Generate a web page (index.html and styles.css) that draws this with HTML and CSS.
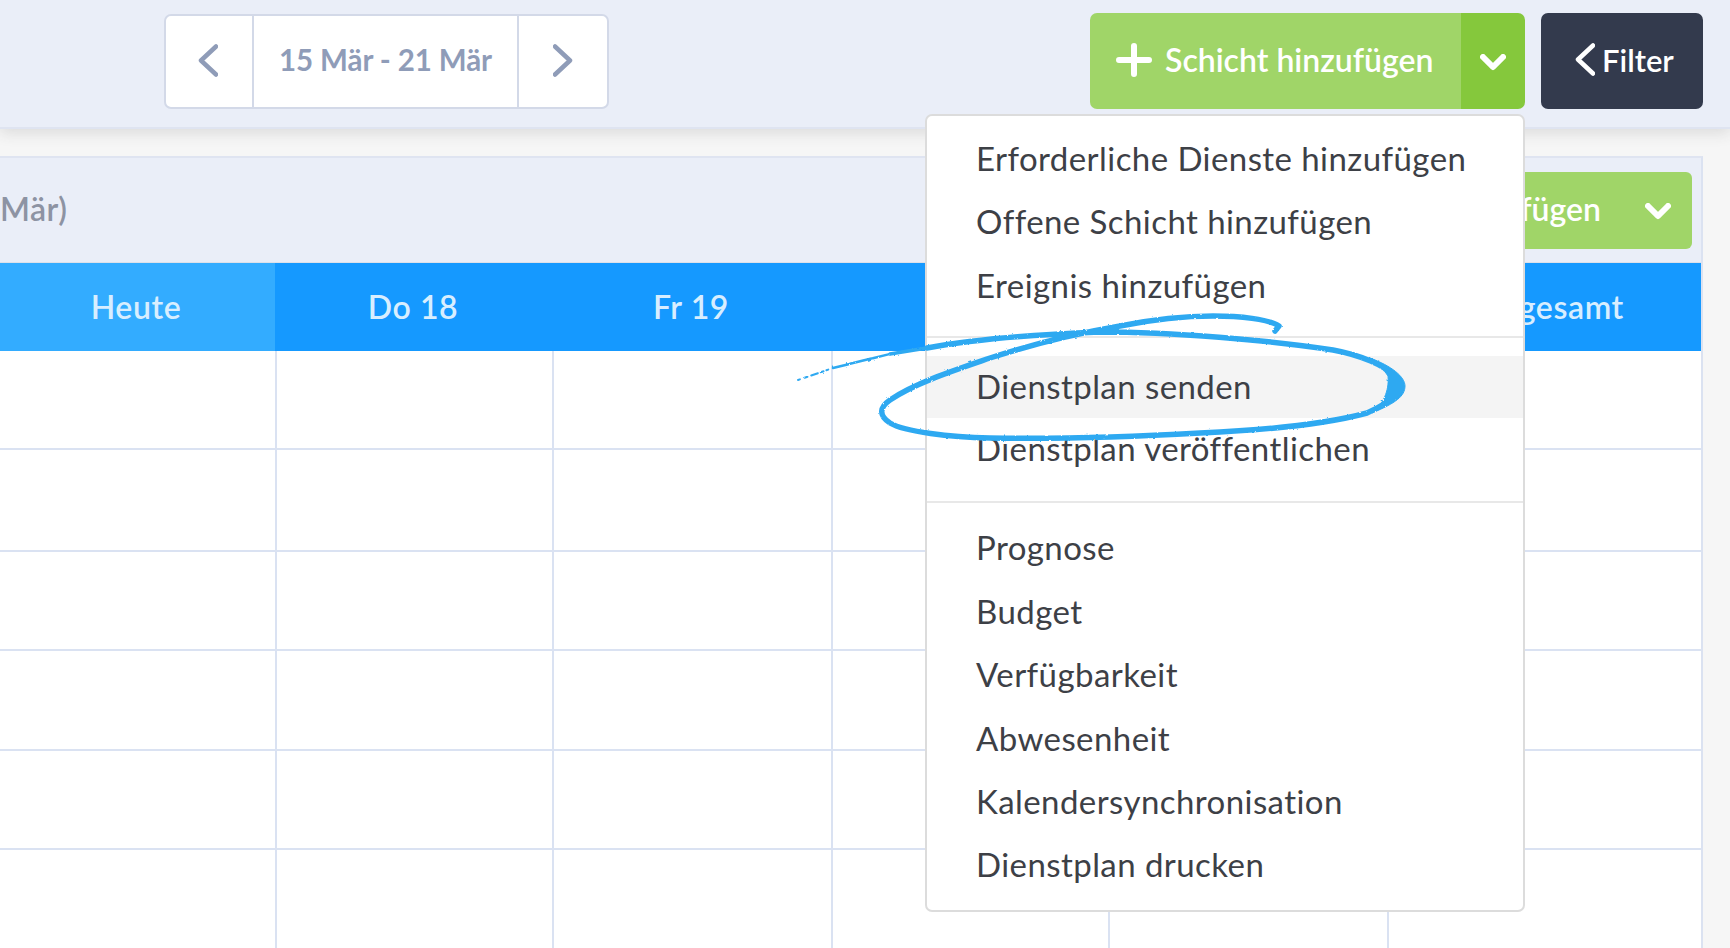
FILE: index.html
```html
<!DOCTYPE html>
<html lang="de">
<head>
<meta charset="utf-8">
<title>Dienstplan</title>
<link rel="stylesheet" href="styles.css">
</head>
<body>
<div class="page">
  <header class="topbar">
    <div class="pager">
      <button class="pager-arrow"><svg class="ico-nav" viewBox="0 0 20 33"><path d="M18 2.5 3 16.5 18 30.5"/></svg></button>
      <div class="pager-date">15 Mär - 21 Mär</div>
      <button class="pager-arrow pager-next"><svg class="ico-nav" viewBox="0 0 20 33"><path d="M2 2.5 17 16.5 2 30.5"/></svg></button>
    </div>
    <div class="actions">
      <div class="add-wrap">
        <div class="split">
          <button class="split-main"><svg class="ico-plus" viewBox="0 0 36 34"><path d="M18 3V31M3 17H33"/></svg><span>Schicht hinzufügen</span></button>
          <button class="split-caret"><svg class="ico-caret" viewBox="0 0 26 17"><path d="M3 3 13 13 23 3"/></svg></button>
        </div>
        <nav class="menu">
          <div class="menu-group">
            <a class="menu-item">Erforderliche Dienste hinzufügen</a>
            <a class="menu-item">Offene Schicht hinzufügen</a>
            <a class="menu-item">Ereignis hinzufügen</a>
          </div>
          <div class="menu-group menu-group-tight">
            <a class="menu-item is-hover">Dienstplan senden</a>
            <a class="menu-item">Dienstplan veröffentlichen</a>
          </div>
          <div class="menu-group">
            <a class="menu-item">Prognose</a>
            <a class="menu-item">Budget</a>
            <a class="menu-item">Verfügbarkeit</a>
            <a class="menu-item">Abwesenheit</a>
            <a class="menu-item">Kalendersynchronisation</a>
            <a class="menu-item">Dienstplan drucken</a>
          </div>
        </nav>
      </div>
      <button class="filter"><svg class="ico-filter" viewBox="0 0 20 33"><path d="M18 2.5 3 16.5 18 30.5"/></svg><span>Filter</span></button>
    </div>
  </header>

  <section class="panel">
    <div class="panel-head">
      <div class="panel-title">Mär)</div>
      <button class="panel-add"><span>Schicht hinzufügen</span><svg class="ico-caret" viewBox="0 0 26 17"><path d="M3 3 13 13 23 3"/></svg></button>
    </div>
    <div class="grid">
      <div class="col-head is-today">Heute</div>
      <div class="col-head">Do 18</div>
      <div class="col-head">Fr 19</div>
      <div class="col-head">Sa 20</div>
      <div class="col-head">So 21</div>
      <div class="col-head col-total">Insgesamt</div>
      <div class="cell"></div><div class="cell"></div><div class="cell"></div><div class="cell"></div><div class="cell"></div><div class="cell"></div>
      <div class="cell"></div><div class="cell"></div><div class="cell"></div><div class="cell"></div><div class="cell"></div><div class="cell"></div>
      <div class="cell"></div><div class="cell"></div><div class="cell"></div><div class="cell"></div><div class="cell"></div><div class="cell"></div>
      <div class="cell"></div><div class="cell"></div><div class="cell"></div><div class="cell"></div><div class="cell"></div><div class="cell"></div>
      <div class="cell"></div><div class="cell"></div><div class="cell"></div><div class="cell"></div><div class="cell"></div><div class="cell"></div>
      <div class="cell"></div><div class="cell"></div><div class="cell"></div><div class="cell"></div><div class="cell"></div><div class="cell"></div>
    </div>
  </section>

  <svg class="scribble" viewBox="0 0 1730 948" aria-hidden="true">
    <defs>
      <filter id="rough" x="-5%" y="-20%" width="110%" height="140%">
        <feTurbulence type="fractalNoise" baseFrequency="0.35" numOctaves="2" seed="4"/>
        <feDisplacementMap in="SourceGraphic" scale="2.2"/>
      </filter>
    </defs>
    <g filter="url(#rough)">
      <path class="scribble-dots" d="M798 380 833 368"/>
      <path class="scribble-tail" d="M833 368 890 354"/>
      <path class="scribble-thin" d="M890 354 927 348"/>
      <path class="scribble-main" d="M927 348C970 340 1020 335 1100 332 1170 332 1270 340 1333 350 1360 355 1385 365 1397 378 1402 390 1395 400 1367 413 1330 423 1270 430 1200 433 1130 437 1050 439 990 438 950 437 905 432 890 423 878 415 880 407 890 400 915 383 955 370 990 358 1045 340 1085 332 1120 326 1150 320 1185 316 1213 316 1240 316 1268 319 1279 326L1275 331"/>
      <path class="scribble-bulge" d="M1370 358C1392 366 1405 377 1405 386 1405 396 1396 403 1372 413 1386 402 1389 387 1388 376 1384 370 1378 364 1370 358Z"/>
    </g>
  </svg>
</div>
</body>
</html>
```

FILE: styles.css
```css
* { box-sizing: border-box; }
html, body { margin: 0; padding: 0; }
body {
  background: #f6f6f6;
  font-family: "Lato", "Liberation Sans", sans-serif;
  color: #3d4046;
}
button { font: inherit; border: 0; padding: 0; cursor: pointer; }
svg { display: block; fill: none; stroke-linecap: round; stroke-linejoin: round; }

.page { position: relative; width: 1730px; height: 948px; overflow: hidden; }

/* top bar */
.topbar {
  display: flex;
  justify-content: space-between;
  height: 129px;
  padding: 14px 27px 0 164px;
  background: #eaeef8;
  border-bottom: 2px solid #dfe4f1;
  box-shadow: 0 4px 14px rgba(60, 60, 60, .14);
  position: relative;
  z-index: 2;
}
.pager {
  display: flex;
  width: 445px;
  height: 95px;
  background: #fff;
  border: 2px solid #d3d9e8;
  border-radius: 7px;
}
.pager-arrow {
  flex: 0 0 86px;
  display: flex;
  align-items: center;
  justify-content: center;
  padding: 0 3px 3px 0;
  background: none;
}
.pager-next { flex: 1; padding: 0 0 3px; }
.pager-date {
  flex: 0 0 267px;
  display: flex;
  align-items: center;
  justify-content: center;
  padding-bottom: 4px;
  border-left: 2px solid #d3d9e8;
  border-right: 2px solid #d3d9e8;
  color: #8f9cb8;
  font-size: 29.5px;
  font-weight: 700;
  letter-spacing: -.1px;
}
.ico-nav { width: 20px; height: 33px; stroke: #8f9cb8; stroke-width: 4.5; }

.actions { display: flex; gap: 16px; margin-top: -1px; }
.add-wrap { position: relative; }
.split { display: flex; width: 435px; height: 96px; border-radius: 7px; overflow: hidden; }
.split-main {
  flex: 0 0 371px;
  display: flex;
  align-items: center;
  gap: 13px;
  padding: 0 0 3px 26px;
  background: #a0d568;
  color: #fff;
  font-size: 32px;
  font-weight: 600;
}
.split-caret {
  flex: 1;
  display: flex;
  align-items: center;
  justify-content: center;
  padding-top: 3px;
  background: #85c83c;
}
.ico-plus { width: 36px; height: 34px; stroke: #fff; stroke-width: 6; }
.ico-caret { width: 26px; height: 17px; stroke: #fff; stroke-width: 6; }
.filter {
  display: flex;
  align-items: center;
  gap: 7px;
  width: 162px;
  height: 96px;
  padding: 0 0 3px 34px;
  background: #333a4d;
  border-radius: 7px;
  color: #fff;
  font-size: 31px;
  font-weight: 600;
}
.ico-filter { width: 20px; height: 33px; stroke: #fff; stroke-width: 4.5; }

/* dropdown */
.menu {
  position: absolute;
  top: 101px;
  right: 0;
  width: 600px;
  height: 798px;
  padding: 12px 0;
  background: #fff;
  border: 2px solid #dcdcdc;
  border-radius: 7px;
  z-index: 3;
}
.menu-group { padding: 18px 0; border-bottom: 2px solid #e8e8e8; }
.menu-group:first-child { padding-top: 0; }
.menu-group:last-child { padding: 14.5px 0 0; border-bottom: 0; }
.menu-item {
  display: block;
  height: 63.4px;
  padding-left: 49px;
  font-size: 33px;
  letter-spacing: .43px;
  line-height: 60px;
  color: #3d4046;
}
.menu-group-tight { padding-bottom: 20.8px; }
.menu-group-tight .menu-item { height: 62px; }
.is-hover { background: #f4f4f4; }

/* schedule panel */
.panel {
  width: 1703px;
  margin-top: 27px;
  background: #fff;
  border-top: 2px solid #dfe4f1;
  border-right: 2px solid #dbe2f1;
}
.panel-head {
  display: flex;
  justify-content: space-between;
  align-items: center;
  height: 105px;
  padding-right: 9px;
  background: #eaeef8;
  border-bottom: 1px solid #dde1ea;
}
.panel-title { padding-bottom: 4px; font-size: 32px; font-weight: 600; letter-spacing: .5px; color: #8d93a3; }
.panel-add {
  display: flex;
  align-items: center;
  justify-content: flex-end;
  gap: 44px;
  width: 380px;
  height: 77px;
  padding: 0 21px 3px 0;
  background: #a0d568;
  border-radius: 6px;
  color: #fff;
  font-size: 32px;
  font-weight: 600;
}
.panel-add .ico-caret { margin-top: 6px; }
.grid {
  display: grid;
  grid-template-columns: 277px 277px 279px 277px 279px 1fr;
  grid-template-rows: 88px 99px 102px 99px 100px 99px 100px;
}
.col-head {
  display: flex;
  align-items: center;
  justify-content: center;
  padding: 0 5px 2px 0;
  background: #1599ff;
  color: #d8eeff;
  font-size: 32px;
  font-weight: 600;
  letter-spacing: .6px;
}
.col-total { padding-left: 10px; padding-right: 0; }
.is-today { background: #33acff; box-shadow: inset -2px 0 0 #1599ff; }
.cell { border-right: 2px solid #dae2f2; border-bottom: 2px solid #dae2f2; }
.cell:nth-child(6n) { border-right: 0; }

/* hand-drawn annotation */
.scribble { position: absolute; inset: 0; width: 1730px; height: 948px; z-index: 4; stroke: #2fa9f1; pointer-events: none; }
.scribble-dots { stroke-width: 2; stroke-dasharray: 2 5 3 4 7 3 3 3; }
.scribble-tail { stroke-width: 2.5; stroke-dasharray: 16 1.5 22 1.5; }
.scribble-thin { stroke-width: 3.5; }
.scribble-main { stroke-width: 5.5; }
.scribble-bulge { fill: #2fa9f1; stroke-width: 1; }
```
